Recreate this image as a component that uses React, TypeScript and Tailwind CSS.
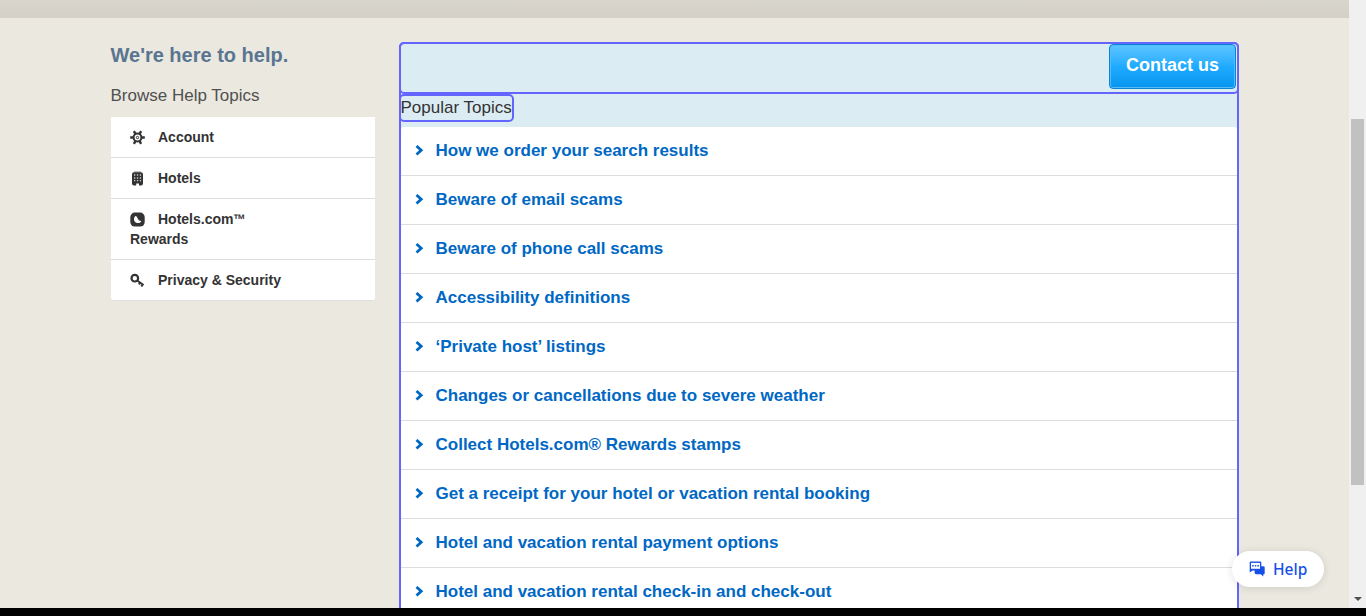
import React from "react";

function GearIcon() {
  return (
    <svg width="15" height="15" viewBox="0 0 15 15" fill="none" stroke="#333">
      <circle cx="7.5" cy="7.5" r="3.9" strokeWidth="2" />
      <circle cx="7.5" cy="7.5" r="1.200" strokeWidth="1" />
      <path d="M0.2 7.5H3M12 7.5h2.8M3.900 1.200l1.500 2.600M9.600 11.200l1.500 2.600M11.100 1.200L9.600 3.800M5.400 11.200l-1.500 2.600" strokeWidth="2.400" />
    </svg>
  );
}

function HotelIcon() {
  return (
    <svg width="15" height="15" viewBox="0 0 15 15">
      <path d="M4 0h7v1.500H4z" fill="#bcbcbf" />
      <path d="M4 1.200h7q2 0 2 2V12.500q0 2-2 2H9v-2H6.200v2H4q-2 0-2-2V3.200q0-2 2-2z" fill="#333" />
      <path d="M4 3.300h1.300v1.500H4zM6.900 3.300h1.300v1.500H6.900zM9.800 3.300h1.300v1.500H9.800zM4 6.200h1.300v1.500H4zM6.900 6.200h1.300v1.500H6.900zM9.800 6.200h1.300v1.500H9.800zM4 9h1.300v1.300H4zM6.900 9h1.300v1.300H6.900zM9.800 9h1.300v1.300H9.800z" fill="#ccc" />
    </svg>
  );
}

function RewardsIcon() {
  return (
    <svg width="15" height="15" viewBox="0 0 15 15">
      <rect x="0.300" y="0.600" width="14.400" height="14" rx="4.500" fill="#333" />
      <path d="M5.300 4C3.300 6 3.700 9.300 5.900 10.600C8 11.700 10.300 11 11.300 8.900L9 8.500 7.700 6.600 6.700 4.400z" fill="#fff" />
    </svg>
  );
}

function KeyIcon() {
  return (
    <svg width="15" height="15" viewBox="0 0 15 15" fill="none" stroke="#333">
      <circle cx="4.800" cy="5.200" r="3.300" strokeWidth="2.200" />
      <path d="M7.200 7.500l6.300 4.500M8.800 11.300l1.800-2.200M11.300 13.500l1.800-2.400" strokeWidth="2" />
    </svg>
  );
}

function ChatIcon() {
  return (
    <svg width="16" height="16" viewBox="0 0 16 16">
      <path d="M11.800 5.200h2.500q1.400 0 1.400 1.400v5.600q0 1-1 1h-.4v2.300l-2.500-2.300H7q-1.400 0-1.400-1.400V8.500h6.200z" fill="#1650e8" />
      <path d="M1.800.5h9.400q1.100 0 1.100 1.100v6.700q0 1.100-1.100 1.100H3.600L.7 11.600v-10Q.7.500 1.800.500z" fill="#1650e8" />
      <path d="M2 1.900h9v5.900H2z" fill="#fff" />
      <path d="M3.200 4h1.500v1.600H3.200zM5.800 4h1.500v1.600H5.800zM8.400 4h1.500v1.600H8.400z" fill="#1650e8" />
    </svg>
  );
}

const topics: React.ReactNode[] = [
  "How we order your search results",
  "Beware of email scams",
  "Beware of phone call scams",
  "Accessibility definitions",
  "‘Private host’ listings",
  "Changes or cancellations due to severe weather",
  "Collect Hotels.com® Rewards stamps",
  "Get a receipt for your hotel or vacation rental booking",
  "Hotel and vacation rental payment options",
  "Hotel and vacation rental check-in and check-out",
];

const categories: { label: React.ReactNode; icon: React.ReactNode }[] = [
  { label: "Account", icon: <GearIcon /> },
  { label: "Hotels", icon: <HotelIcon /> },
  { label: <>Hotels.com<span className="inline-block origin-left scale-x-90">™</span> Rewards</>, icon: <RewardsIcon /> },
  { label: "Privacy & Security", icon: <KeyIcon /> },
];

export default function App() {
  return (
    <div className="relative flex h-[616px] w-[1366px] flex-col overflow-hidden bg-black font-['Liberation_Sans',Arial,sans-serif] text-[#333]">
      <div className="flex h-[608px] overflow-hidden">
        <div className="flex w-[1349px] flex-col overflow-hidden bg-[#ebe8e0]">
          <div className="h-[18px] shrink-0 bg-linear-to-b from-[#d8d5cd] to-[#d4d0c8]" />
          <div className="flex items-start pl-[111px]">
            <aside className="w-[264px] shrink-0 pt-[24px]">
              <h1 className="-ml-[0.5px] text-[20px] leading-[26px] font-bold whitespace-nowrap text-[#597590]">We're here to help.</h1>
              <h2 className="-ml-[0.5px] mt-[18px] text-[17px] leading-[20px] text-[#505050]">Browse Help Topics</h2>
              <ul className="mt-[11px] rounded-b-[3px] bg-white">
                {categories.map((c, i) => (
                  <li key={i} className="border-b border-[#dddddf] py-[10px] pr-[100px] pl-[19px] text-[14px] leading-[20px] font-bold last:rounded-b-[3px] last:pr-0">
                    <span className="mr-[13px] inline-block h-[15px] w-[15px] align-[-3px]">{c.icon}</span>
                    {c.label}
                  </li>
                ))}
              </ul>
            </aside>
            <main className="mt-[24px] ml-[24px] h-[650px] w-[840px] shrink-0 rounded-[5px] border-2 border-[#6464ff] bg-[#dcecf3]">
              <div className="-mx-[2px] -mt-[2px] flex h-[52px] justify-end rounded-[5px] border-2 border-[#6464ff] pr-[1px]">
                <button className="flex h-[45px] w-[127px] items-center justify-center rounded-[4px] border border-[#0783d8] bg-linear-to-b from-[#5bc5ff] via-[#1eabff] to-[#0594ee] pb-[3px] text-[18px] font-bold text-white shadow-[inset_0_0_0_1px_#55bcf9]">Contact us</button>
              </div>
              <div className="-ml-[2px] h-[33px]">
                <h3 className="flex h-[28px] w-[115px] items-center rounded-[5px] border-2 border-[#6464ff] text-[17px] leading-[24px] whitespace-nowrap"><span className="-ml-[0.5px]">Popular Topics</span></h3>
              </div>
              <ul className="rounded-t-[3px] bg-white">
                {topics.map((t, i) => (
                  <li key={i} className="flex h-[49px] items-center border-b border-[#dddddf] pl-[14px] text-[17px] font-bold text-[#0068c4]">
                    <svg width="9" height="12" viewBox="0 0 9 12" className="mr-[11.5px] shrink-0" fill="none" stroke="#0068c4" strokeWidth="2.800">
                      <path d="M1.500 1L6.200 5.200 1.500 9.500" />
                    </svg>
                    <span>{t}</span>
                  </li>
                ))}
              </ul>
            </main>
          </div>
        </div>
        <div className="flex w-[17px] flex-col items-center justify-between bg-[#f0f0f0] pt-[119px] pb-[7px]">
          <div className="h-[366px] w-[13px] bg-[#c1c1c1]" />
          <svg width="8" height="4" viewBox="0 0 8 4"><path d="M0 0h8L4 4z" fill="#505050" /></svg>
        </div>
      </div>
      <button className="absolute top-[551px] left-[1232px] flex h-[36px] w-[92px] items-center rounded-full bg-white pl-[17px] font-['Noto_Sans',sans-serif] text-[15.5px] text-[#1650e8] shadow-[0_1px_8px_rgba(0,0,0,0.12)]">
        <ChatIcon />
        <span className="ml-[8px] pt-[2px] font-medium">Help</span>
      </button>
    </div>
  );
}
